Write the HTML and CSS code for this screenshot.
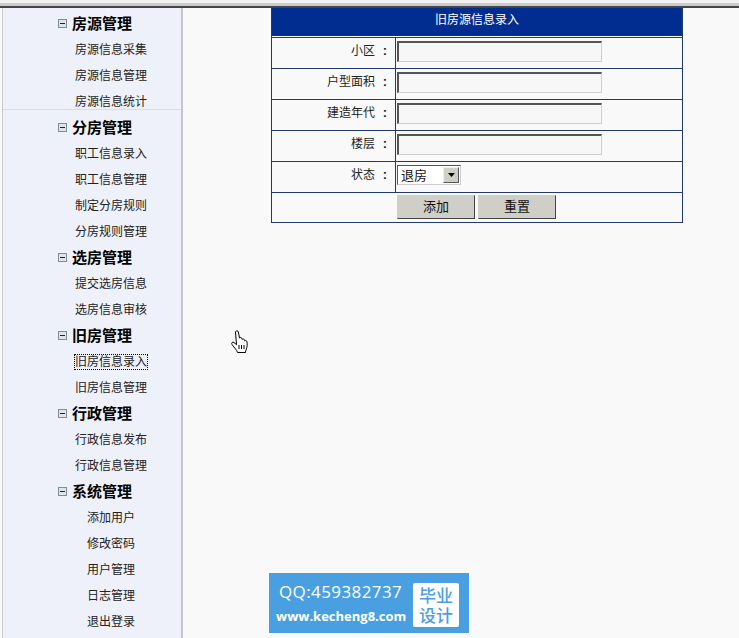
FILE: index.html
```html
<!DOCTYPE html>
<html lang="zh-CN">
<head>
    <meta charset="UTF-8">
    <meta name="viewport" content="width=device-width, initial-scale=1.0">
    <title>旧房源信息录入</title>
    <link rel="stylesheet" href="styles.css">
</head>
<body>
    <div class="top-strip"></div>
    <div class="layout">
        <div class="sidebar">
            <div class="menu-group first-group">
                <div class="menu-title"><svg class="toggle" width="9" height="9" viewBox="0 0 9 9"><rect x="0.5" y="0.5" width="8" height="8" fill="#dfe3ea" stroke="#7f8c9c"/><path d="M2 4.500h5" stroke="#222"/></svg>房源管理</div>
                <a class="menu-item">房源信息采集</a>
                <a class="menu-item">房源信息管理</a>
                <a class="menu-item">房源信息统计</a>
            </div>
            <div class="menu-group">
                <div class="menu-title"><svg class="toggle" width="9" height="9" viewBox="0 0 9 9"><rect x="0.5" y="0.5" width="8" height="8" fill="#dfe3ea" stroke="#7f8c9c"/><path d="M2 4.500h5" stroke="#222"/></svg>分房管理</div>
                <a class="menu-item">职工信息录入</a>
                <a class="menu-item">职工信息管理</a>
                <a class="menu-item">制定分房规则</a>
                <a class="menu-item">分房规则管理</a>
            </div>
            <div class="menu-group">
                <div class="menu-title"><svg class="toggle" width="9" height="9" viewBox="0 0 9 9"><rect x="0.5" y="0.5" width="8" height="8" fill="#dfe3ea" stroke="#7f8c9c"/><path d="M2 4.500h5" stroke="#222"/></svg>选房管理</div>
                <a class="menu-item">提交选房信息</a>
                <a class="menu-item">选房信息审核</a>
            </div>
            <div class="menu-group">
                <div class="menu-title"><svg class="toggle" width="9" height="9" viewBox="0 0 9 9"><rect x="0.5" y="0.5" width="8" height="8" fill="#dfe3ea" stroke="#7f8c9c"/><path d="M2 4.500h5" stroke="#222"/></svg>旧房管理</div>
                <a class="menu-item"><span class="focused">旧房信息录入</span></a>
                <a class="menu-item">旧房信息管理</a>
            </div>
            <div class="menu-group">
                <div class="menu-title"><svg class="toggle" width="9" height="9" viewBox="0 0 9 9"><rect x="0.5" y="0.5" width="8" height="8" fill="#dfe3ea" stroke="#7f8c9c"/><path d="M2 4.500h5" stroke="#222"/></svg>行政管理</div>
                <a class="menu-item">行政信息发布</a>
                <a class="menu-item">行政信息管理</a>
            </div>
            <div class="menu-group">
                <div class="menu-title"><svg class="toggle" width="9" height="9" viewBox="0 0 9 9"><rect x="0.5" y="0.5" width="8" height="8" fill="#dfe3ea" stroke="#7f8c9c"/><path d="M2 4.500h5" stroke="#222"/></svg>系统管理</div>
                <a class="menu-item">添加用户</a>
                <a class="menu-item">修改密码</a>
                <a class="menu-item">用户管理</a>
                <a class="menu-item">日志管理</a>
                <a class="menu-item">退出登录</a>
            </div>
        </div>

        <div class="main">
            <table class="form-table">
                <tr>
                    <th colspan="2" class="form-title"><div>旧房源信息录入</div></th>
                </tr>
                <tr>
                    <td class="label-cell">小区<span class="colon">:</span></td>
                    <td class="field-cell"><input type="text" class="text-input"></td>
                </tr>
                <tr>
                    <td class="label-cell">户型面积<span class="colon">:</span></td>
                    <td class="field-cell"><input type="text" class="text-input"></td>
                </tr>
                <tr>
                    <td class="label-cell">建造年代<span class="colon">:</span></td>
                    <td class="field-cell"><input type="text" class="text-input"></td>
                </tr>
                <tr>
                    <td class="label-cell">楼层<span class="colon">:</span></td>
                    <td class="field-cell"><input type="text" class="text-input"></td>
                </tr>
                <tr>
                    <td class="label-cell">状态<span class="colon">:</span></td>
                    <td class="field-cell">
                        <div class="select-box">
                            <span class="select-value">退房</span>
                            <span class="select-arrow"><svg width="7" height="4" viewBox="0 0 7 4"><path d="M0 0h7L3.500 4z" fill="#000"/></svg></span>
                        </div>
                    </td>
                </tr>
                <tr>
                    <td colspan="2" class="button-cell"><button class="form-btn">添加</button><button class="form-btn">重置</button></td>
                </tr>
            </table>

            <div class="banner">
                <div class="banner-text">
                    <div class="banner-qq">QQ:459382737</div>
                    <div class="banner-url">www.kecheng8.com</div>
                </div>
                <div class="banner-badge">毕业<br>设计</div>
            </div>

            <!-- 鼠标指针 -->
            <svg class="hand-cursor" width="17" height="24" viewBox="0 0 17 24">
                <path d="M4.500 1.800c.6 -1.300 2.400 -1.300 2.800 0L8.500 8c.6 -.9 2.100 -.7 2.400 .5l.3 1c.6 -.8 2 -.6 2.300 .5l.2 .8c.7 -.5 2 -.2 2.300 1 .4 2.500 .2 5 -.6 7 -.4 1 -.8 2 -.9 3.700H6.500c-.3 -1.500 -1 -2.500 -2 -3.500L1 14.500c-1 -1.400 .5 -3 2 -2l2.500 2.200z" fill="#fff" stroke="#000" stroke-width="1"/>
                <path d="M8 15v4M10.500 15v4M13 15v4" stroke="#000" stroke-width="1" fill="none"/>
            </svg>
        </div>
    </div>
</body>
</html>
```

FILE: styles.css
```css
html, body {
    height: 100%;
}
body {
    margin: 0;
    height: 638px;
    overflow: hidden;
    display: flex;
    flex-direction: column;
    background-color: #f9f9f9;
    font-family: "Liberation Sans", "Noto Sans CJK SC", sans-serif;
    font-size: 12px;
    color: #111;
}
.top-strip {
    height: 3px;
    flex: none;
    background-color: #cbcbcb;
    border-top: 3px solid #f2f2f2;
    border-bottom: 2px solid #444;
}
.layout {
    flex: 1;
    display: flex;
    min-height: 0;
}

/* 左侧菜单 */
.sidebar {
    width: 178px;
    margin-left: 2px;
    padding-top: 3px;
    flex: none;
    background-color: #eff1fa;
    border-left: 1px solid #c9c9c9;
    border-right: 2px solid #c4c6cc;
    overflow: hidden;
}
.menu-group {
    position: relative;
}
.first-group::after {
    content: "";
    position: absolute;
    left: 0;
    right: 0;
    top: 98px;
    height: 6px;
    background-color: #eff1fa;
    border-top: 1px solid #dcdde3;
}
.menu-title {
    box-sizing: border-box;
    height: 26px;
    display: flex;
    align-items: center;
    padding-left: 55px;
    padding-bottom: 4px;
    font-size: 15px;
    font-weight: bold;
    color: #000;
}
.toggle {
    margin-right: 5px;
    margin-top: 3px;
    flex: none;
}
.menu-item {
    display: block;
    height: 26px;
    line-height: 26px;
    width: 216px;
    text-align: center;
    color: #222;
}
.focused {
    outline: 1px dotted #000;
    outline-offset: 0;
}

/* 右侧内容 */
.main {
    flex: 1;
    position: relative;
    display: flex;
    flex-direction: column;
    padding-left: 88px;
    padding-bottom: 5px;
}
.form-table {
    width: 412px;
    border-collapse: separate;
    border-spacing: 0;
    border-left: 1px solid #1f3a6d;
    border-right: 1px solid #1f3a6d;
    border-bottom: 1px solid #1f3a6d;
}
.form-table td {
    box-sizing: border-box;
    height: 31px;
    padding: 0;
    border-bottom: 1px solid #1f3a6d;
    vertical-align: top;
}
.form-table tr:last-child td {
    height: 29px;
    border-bottom: none;
}
.form-title {
    padding: 0;
    font-weight: normal;
    border-bottom: 1px solid #1f3a6d;
}
.form-title div {
    height: 28px;
    line-height: 24px;
    margin-bottom: 1px;
    background-color: #002d8f;
    color: #fff;
    text-align: center;
    font-size: 12px;
}
.form-table .label-cell {
    width: 124px;
    padding-top: 3px;
    text-align: right;
    color: #222;
    border-right: 1px solid #1f3a6d;
}
.colon {
    display: inline-block;
    width: 20px;
    text-align: center;
    font-weight: bold;
    font-size: 13px;
}
.form-table .field-cell {
    padding: 3px 0 0 1px;
}
.text-input {
    display: block;
    box-sizing: border-box;
    width: 205px;
    height: 21px;
    padding: 1px 2px;
    background-color: #f7f7f7;
    border-style: solid;
    border-width: 2px 1px 1px 2px;
    border-color: #555 #cfcfcf #cfcfcf #555;
}
.select-box {
    box-sizing: border-box;
    width: 64px;
    height: 20px;
    display: flex;
    align-items: center;
    justify-content: space-between;
    background-color: #fff;
    border-style: solid;
    border-width: 1px;
    border-color: #555 #ccc #ccc #555;
}
.select-value {
    padding-left: 3px;
    padding-bottom: 2px;
    font-size: 13px;
    color: #111;
}
.select-arrow {
    box-sizing: border-box;
    width: 16px;
    height: 16px;
    margin-right: 1px;
    display: flex;
    align-items: center;
    justify-content: center;
    background-color: #d0cfc7;
    border: 1px solid;
    border-color: #eee #555 #555 #eee;
}
.form-table .button-cell {
    padding: 2px 0 0 125px;
}
.form-btn {
    box-sizing: border-box;
    width: 78px;
    height: 24px;
    padding: 0 0 3px;
    margin: 0;
    vertical-align: top;
    font-family: inherit;
    font-size: 13px;
    color: #111;
    background-color: #d0cfc7;
    border: 1px solid;
    border-color: #d0cfc7 #444 #444 #d0cfc7;
}
.form-btn + .form-btn {
    margin-left: 3px;
}

/* 底部广告 */
.banner {
    width: 200px;
    height: 60px;
    margin-top: auto;
    margin-left: -2px;
    flex: none;
    display: flex;
    align-items: center;
    justify-content: space-between;
    box-sizing: border-box;
    padding: 0 10px 0 7px;
    background-color: #4a9fe0;
    color: #fff;
}
.banner-qq {
    padding-left: 3px;
    font-family: "Open Sans", "Noto Sans", sans-serif;
    font-size: 17px;
    letter-spacing: 0.4px;
    line-height: 24px;
}
.banner-url {
    padding-top: 2px;
    font-family: "Open Sans", "Noto Sans", sans-serif;
    font-size: 13px;
    font-weight: bold;
    line-height: 20px;
}
.banner-badge {
    box-sizing: border-box;
    width: 46px;
    height: 44px;
    margin-top: 4px;
    padding-top: 2px;
    background-color: #fff;
    border-radius: 2px;
    color: #4a9fe0;
    font-family: "Noto Sans CJK SC", sans-serif;
    font-size: 17px;
    font-weight: 500;
    line-height: 20px;
    text-align: center;
}
.hand-cursor {
    position: absolute;
    left: 48px;
    top: 322px;
}
```
